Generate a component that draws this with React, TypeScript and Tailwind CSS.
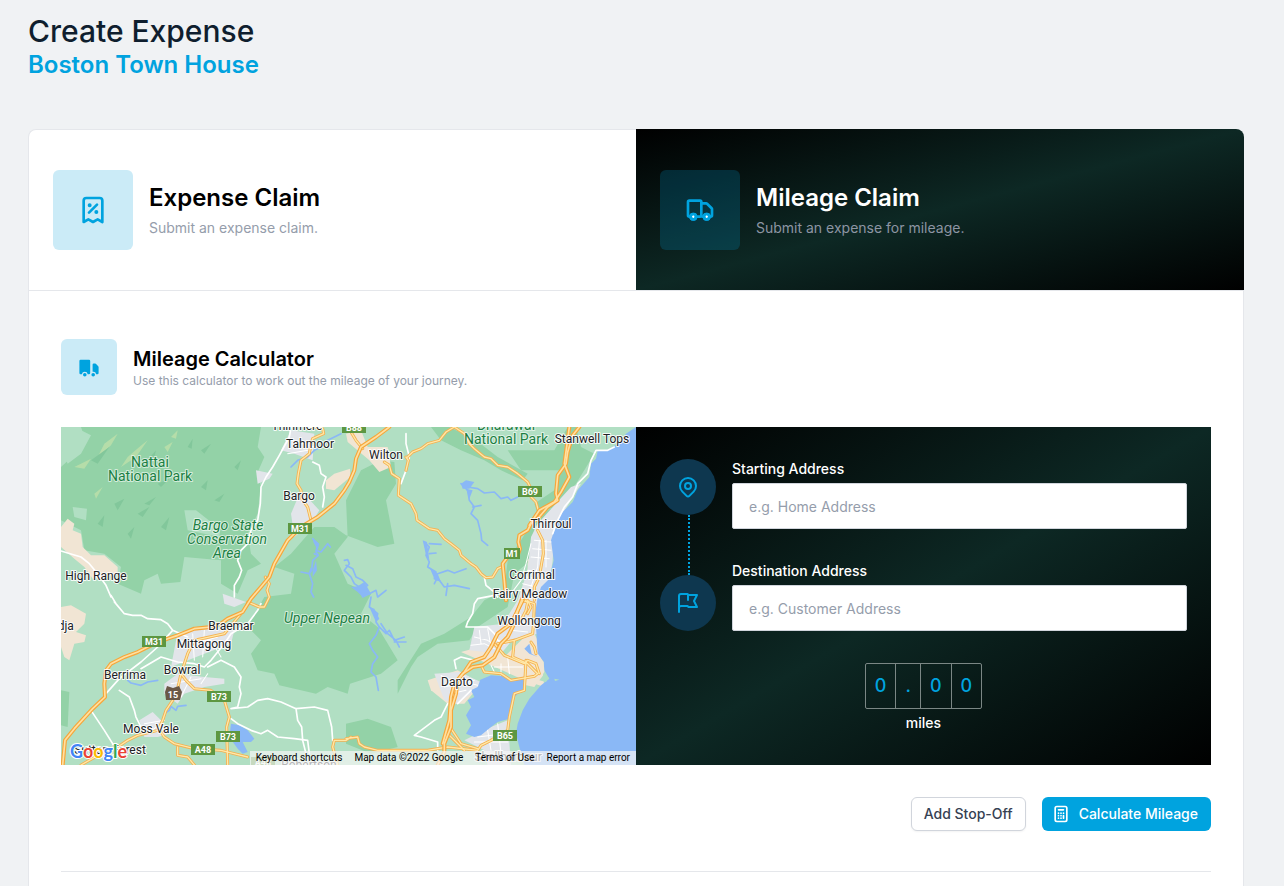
import { useState } from 'react';
import {
  HiOutlineCalculator,
  HiOutlineFlag,
  HiOutlineLocationMarker,
  HiOutlineReceiptTax,
  HiTruck,
} from 'react-icons/hi';

type Label = { text: string; x: number; y: number; park?: boolean; italic?: boolean };

const labels: Label[] = [
  { text: 'Thirlmere', x: 236, y: 3 },
  { text: 'Tahmoor', x: 249, y: 21 },
  { text: 'Wilton', x: 325, y: 32 },
  { text: 'Stanwell Tops', x: 531, y: 16 },
  { text: 'Dharawal', x: 445, y: 3, park: true },
  { text: 'National Park', x: 445, y: 17, park: true },
  { text: 'Nattai', x: 89, y: 40, park: true },
  { text: 'National Park', x: 89, y: 54, park: true },
  { text: 'Bargo', x: 238, y: 73 },
  { text: 'Bargo State', x: 167, y: 103, park: true, italic: true },
  { text: 'Conservation', x: 166, y: 117, park: true, italic: true },
  { text: 'Area', x: 166, y: 131, park: true, italic: true },
  { text: 'Thirroul', x: 490, y: 101 },
  { text: 'Corrimal', x: 471, y: 152 },
  { text: 'Fairy Meadow', x: 469, y: 171 },
  { text: 'High Range', x: 35, y: 153 },
  { text: 'Wandja', x: -7, y: 203 },
  { text: 'Braemar', x: 170, y: 203 },
  { text: 'Upper Nepean', x: 266, y: 196, park: true, italic: true },
  { text: 'Wollongong', x: 468, y: 198 },
  { text: 'Mittagong', x: 143, y: 221 },
  { text: 'Berrima', x: 64, y: 252 },
  { text: 'Bowral', x: 121, y: 247 },
  { text: 'Dapto', x: 396, y: 259 },
  { text: 'Moss Vale', x: 90, y: 306 },
  { text: 'Sutton Forest', x: 49, y: 327 },
  { text: 'Robertson', x: 248, y: 342 },
  { text: 'Shellharbour', x: 447, y: 334 },
];

const shields = [
  { text: 'B88', x: 293, y: 0 },
  { text: 'M31', x: 239, y: 101 },
  { text: 'B69', x: 469, y: 64 },
  { text: 'M1', x: 451, y: 126 },
  { text: 'M31', x: 93, y: 214 },
  { text: 'B73', x: 158, y: 269 },
  { text: 'B73', x: 167, y: 309 },
  { text: 'A48', x: 142, y: 322 },
  { text: 'A48', x: 202, y: 335 },
  { text: 'B65', x: 444, y: 308 },
];

const parks = [
  'M60 0L600 0L590 60L610 90L588 140L600 180L590 260L560 320L570 380L600 410L560 430L530 500L480 470L480 400L370 390L358 465L300 470L290 440L250 460L240 500L170 470L180 420L130 380L70 370L60 310L0 280L0 120L55 70L70 30Z',
  'M1000 105L1005 170L975 220L1000 350L950 360L855 325L820 300L760 300L690 380L640 420L700 440L690 500L610 510L560 600L600 640L570 680L590 730L640 740L655 775L765 800L800 780L860 800L867 770L960 740L1010 700L950 600L900 560L930 500L860 470L820 380L860 330L855 220L900 130L960 100Z',
  'M1110 0L1165 0L1245 40L1310 90L1400 140L1385 160L1320 130L1270 100L1200 70L1140 40Z',
  'M1340 70L1480 70L1520 0L1545 0L1560 60L1600 80L1545 170L1480 240L1430 260L1420 230L1480 190L1500 130L1380 130Z',
  'M1430 260L1500 235L1420 300L1410 400L1360 440L1340 540L1250 600L1225 640L1130 650L1070 690L1050 720L1010 800L1010 760L1080 650L1150 620L1230 570L1270 520L1330 490L1340 400L1380 340Z',
  'M0 790L25 795L20 900L0 895Z',
  'M855 890L920 875L990 900L1010 960L930 980L855 950Z',
];

const beige = [
  'M0 300L20 275L40 290L35 310L60 320L65 360L90 385L130 385L170 420L170 435L140 450L95 455L70 420L40 395L0 360Z',
  'M0 540L30 535L75 560L70 590L45 615L75 625L70 645L40 650L25 700L10 690L0 660Z',
  'M795 160L820 140L867 125L868 150L820 190L795 185Z',
  'M855 20L900 10L920 60L980 60L990 120L955 135L925 100L860 45Z',
  'M1100 760L1190 730L1260 770L1210 830L1160 830L1110 790Z',
  'M1200 675L1290 650L1330 690L1400 620L1410 600L1430 640L1440 690L1450 780L1390 760L1280 710Z',
  'M1400 400L1440 340L1430 420L1400 470Z',
];

const urban = [
  'M660 70L690 10L760 20L755 100L700 80Z',
  'M585 130L635 140L625 155L590 170Z',
  'M690 260L720 190L775 250L750 290L700 330Z',
  'M485 500L555 525L520 540L490 530Z',
  'M350 615L440 600L520 610L510 650L430 680L330 720Z',
  'M310 770L350 740L430 750L490 755L490 770L430 780L370 800L350 830L310 800Z',
  'M235 880L275 855L300 880L325 920L290 930L250 930Z',
  'M1530 180L1560 170L1480 300L1475 400L1465 470L1435 550L1430 620L1340 640L1320 600L1370 520L1400 430L1410 330L1430 290Z',
  'M1240 600L1330 590L1370 620L1320 680L1225 670Z',
  'M1120 740L1195 735L1270 770L1190 830L1150 820Z',
  'M1210 940L1290 900L1340 880L1350 1014L1280 1014L1270 970Z',
];

const coast =
  'M1725 0L1695 20L1675 48L1640 68L1610 72L1605 95L1590 110L1585 150L1550 190L1535 225L1500 260L1480 310L1470 340L1478 400L1465 455L1440 480L1430 510L1422 560L1425 600L1430 680L1448 705L1450 730L1465 755L1440 775L1405 815L1385 850L1370 890L1365 920L1375 960L1390 1014L1725 1014Z';

const lake =
  'M1230 790L1250 780L1258 758L1290 745L1330 748L1360 758L1398 757L1385 790L1360 810L1350 850L1345 875L1310 885L1290 900L1260 925L1240 930L1215 920L1230 895L1215 865L1230 840L1220 820L1240 810Z';

const rivers = [
  'M755 335L770 350L765 375L772 385L755 400L752 430L745 440L755 470L750 495L758 510M720 435L745 440L750 425M765 370L780 375L800 350L808 360M770 385L760 380',
  'M850 400L860 398L865 410L850 430L870 450L880 470L910 490L915 505M855 415L875 425L885 450L905 460L920 475L900 490L905 510L925 500M930 510L925 540L950 560L945 585L955 600L945 625L925 650L935 670L950 690L935 710L930 735L945 750L952 790',
  'M955 600L975 620L985 610L1000 640L1030 630M960 590L980 620L1005 640L1015 660M1000 645L1035 645M925 500L945 490L950 510L975 490',
  'M1200 170L1220 190L1225 220L1240 240L1230 260L1250 280L1260 320L1262 340L1280 355M1220 180L1250 185L1270 198L1300 195L1320 215L1340 210L1350 220L1370 210M1235 240L1260 235',
  'M1090 345L1105 360L1095 385L1105 405L1100 420L1125 435L1120 455L1135 460L1150 480L1180 475L1225 485M1105 350L1140 352M1105 380L1125 378M1130 440L1160 430L1180 438L1215 425M1160 470L1155 505M1130 450L1120 470',
  'M200 760L210 768L240 775L260 765L290 760M310 860L325 850L330 838L345 850L350 838L375 835M690 120L710 100L740 90L760 70L780 60L800 40L840 20',
];

const highways = [
  'M985 0L945 30L900 60L885 95L880 130L865 165L850 190L820 230L770 270L745 285L720 300L680 340L640 410L625 450L600 480L570 515L545 555L500 575L480 590L450 600L400 605L350 625L320 635L270 655L230 675L190 690L150 710L135 730L130 770L132 810L95 845L40 905L12 940L5 1014',
  'M1555 0L1535 25L1520 75L1515 110L1490 145L1485 200L1490 220L1460 240L1430 275L1410 290L1400 310L1375 325L1372 345L1377 365L1370 385L1340 390L1325 410L1330 460L1335 520',
  'M1525 0L1510 110L1525 150L1500 195L1480 225L1435 250L1405 295',
  'M1390 500L1370 550L1360 590L1340 630L1320 650L1300 690L1265 715L1235 720L1205 740L1190 760L1185 800L1170 850L1170 900L1150 950L1150 975L1130 1014',
  'M1385 520L1350 590L1310 620L1290 660L1270 690L1230 705L1210 735L1180 770L1170 810L1165 880L1145 950',
];

const mainRoads = [
  'M760 0L785 5L788 20L755 35L750 50L745 80L720 100L712 140L708 170L720 190L722 215L740 240L750 280',
  'M870 15L885 40L905 65M1040 90L1055 75L1080 65L1100 50L1135 40L1155 15L1180 0L1210 20L1225 50L1240 65L1270 90L1290 95L1310 115L1340 120L1370 140L1400 165L1410 185L1410 210L1425 225L1432 250M1035 90L1042 100L1035 130M970 105L985 115L992 140L1015 155L1012 205L1050 230L1065 260L1068 280L1105 305L1130 310L1150 335L1170 350L1195 370L1200 385L1230 410L1245 420L1260 440L1275 452L1295 450L1310 425L1325 418',
  'M540 560L490 620L400 640L380 680L360 740L375 760L400 785L450 790L490 820L505 870L497 900L500 1014M360 740L350 785L335 820L315 850L305 880L290 910L230 925L200 940L170 960L120 980L60 1014M290 900L310 930L340 950L400 965L480 970L560 990M350 960L350 985L380 990L400 1014',
  'M613 450L625 470L618 490L625 510L610 540L595 540L560 525M870 930L855 940L820 940L815 960L830 1014M855 935L890 930L895 950L910 960L930 965L950 970L1100 970L1160 960L1250 970L1260 955L1290 940L1340 910L1345 870L1360 800L1390 790L1395 700',
  'M1430 310L1445 340L1447 380L1440 420L1435 450L1420 480L1420 520M1390 520L1420 530L1418 580L1415 620L1360 640L1310 650M1360 640L1355 690L1400 710L1430 740L1420 748L1350 760L1320 740L1270 735L1260 715M1300 650L1330 685L1390 710L1400 700L1425 710L1435 740M1160 920L1180 940L1210 970M1170 905L1200 950L1250 965',
  'M1380 520L1400 525L1395 550L1380 580M1400 520L1410 540L1400 560M1410 645L1420 660L1425 680',
];

const whiteRoads = [
  'M690 0L685 30L655 85L635 120L615 150L600 180L598 230L590 280L570 310L560 350L540 370L530 400L542 430L535 450L520 475L520 510M0 372L20 378L60 390L85 410L110 440L135 475L150 510',
  'M135 800L175 755L240 705L290 660L335 610L380 630M150 505L165 530L190 560L215 565L240 565L260 575L300 578L320 590L335 610M190 560L160 525M240 725L300 690L350 705L400 710L430 720L450 700L490 650L510 620L560 590L590 550L600 530M440 720L480 700L520 720L540 750L535 780L540 800L530 840L510 845L560 840L590 820L620 815L660 825L705 845L760 840L800 850L812 900L815 940M705 845L710 880L722 900L725 940L740 1000M175 790L205 810L220 850L225 870L240 900M90 850L130 910L180 990',
  'M510 875L530 890L570 910L600 920L620 910L650 930L700 935L740 940L745 980M755 105L775 115L780 140L795 150L785 180L790 210L785 240M1035 20L1035 50L1045 90L1035 130L1020 170',
  'M1270 450L1275 475L1300 495L1310 510M1300 505L1250 515L1240 530L1235 560L1220 585L1215 600L1250 600L1280 600L1300 620L1310 640L1330 650M1660 60L1640 70L1605 70L1590 100L1580 140L1550 170L1535 210L1510 240L1490 280L1475 320',
  'M1060 925L1120 880L1140 870L1160 830M1060 925L1080 930L1130 945L1130 970M1190 830L1230 790M1185 725L1180 700L1200 690L1240 700',
];

// suburb streets along the coast
const streets = [
  'M1410 350L1395 410L1380 460L1350 500M1420 340L1470 345M1415 365L1470 370M1410 390L1465 395M1435 340L1430 420L1410 480M1455 340L1455 420M1400 430L1440 435M1395 450L1430 455M1385 470L1425 480M1375 490L1410 500',
  'M1240 630L1280 640L1310 660M1255 610L1260 650M1280 605L1290 660M1230 655L1270 650L1300 665M1370 580L1400 590M1350 610L1400 615M1340 690L1345 740M1300 720L1385 720M1320 710L1320 745M1290 715L1300 735',
  'M1140 745L1190 770L1240 760M1150 780L1210 765L1250 775M1170 800L1215 790M1250 930L1330 920M1280 910L1290 970M1310 890L1320 980M1240 945L1340 945',
  'M350 640L400 650L470 630M395 620L400 700M430 610L425 690M450 640L480 690M330 770L420 755M390 750L360 810M420 770L440 740M250 890L310 880M260 920L300 890M680 80L740 70M690 40L760 60',
];

const Shapes = ({ list, color }: { list: string[]; color: string }) => (
  <>
    {list.map((d) => (
      <path key={d} d={d} fill={color} />
    ))}
  </>
);

const Lines = ({ list, color, width }: { list: string[]; color: string; width: number }) => (
  <>
    {list.map((d) => (
      <path key={d} d={d} fill="none" stroke={color} strokeWidth={width} strokeLinejoin="round" strokeLinecap="round" />
    ))}
  </>
);

const googleLetters = [
  { letter: 'G', color: '#4285f4' },
  { letter: 'o', color: '#ea4335' },
  { letter: 'o', color: '#fbbc05' },
  { letter: 'g', color: '#4285f4' },
  { letter: 'l', color: '#34a853' },
  { letter: 'e', color: '#ea4335' },
];

const MapArtwork = () => (
  <svg
    className="absolute inset-0 h-full w-full font-['Roboto',sans-serif]"
    viewBox="0 0 575 338"
    preserveAspectRatio="xMidYMid slice"
    role="img"
    aria-label="Map"
  >
    <rect width="575" height="338" fill="#b1dfc3" />
    {/* terrain is drawn at three times the label scale */}
    <g transform="scale(0.33334)">
      <Shapes list={parks} color="#93d2a7" />
      <path
        d="M130 50L170 20L150 55L110 90ZM200 90L235 60L260 40L225 90L180 120ZM330 30L350 10L345 35ZM100 200L125 180L105 215ZM40 120L90 95L70 125ZM310 60L335 45L320 75Z"
        fill="#b5dda9"
      />
      <path
        d="M90 100L145 60L110 110ZM250 110L285 70L275 110ZM160 230L190 215L170 250ZM250 230L285 210L265 235ZM230 260L265 240L245 270ZM300 300L325 270L315 310ZM200 320L220 300L210 335ZM290 170L325 155L300 180ZM420 70L450 50L430 80ZM520 120L540 100L530 130ZM420 180L440 160L435 190ZM110 290L130 265L125 300ZM380 60L395 35L392 65ZM460 220L490 200L475 225Z"
        fill="#82c79b"
      />
      <path
        d="M0 60L60 10L90 25L60 80L20 110ZM370 250L405 250L450 285L480 290L475 330L430 320L380 310ZM35 240L78 245L75 280L40 270Z"
        fill="#b1dfc3"
      />
      <Shapes list={beige} color="#f1e5d4" />
      <Shapes list={urban} color="#e2e5ea" />
      <path d={coast} fill="#8ab8f6" />
      <path d={lake} fill="#8ab8f6" />
      <path d="M510 890L535 895L560 910L580 935L570 945L545 945L560 975L545 980L530 965L505 930Z" fill="#8ab8f6" />
      <path d="M1370 795L1400 790L1400 815L1375 860L1362 870Z" fill="#b1dfc3" />
      <path d="M1385 700L1430 680L1448 705L1450 735L1420 780L1395 775Z" fill="#f1e5d4" />
      <path d="M1450 740L1463 752L1455 765L1435 760ZM1480 755L1495 758L1482 762Z" fill="#b1dfc3" />
      <path d="M1390 665L1405 650L1412 680L1430 690L1405 680Z" fill="#8ab8f6" />
      <Lines list={rivers} color="#8ab8f6" width={5} />
      <path
        d="M1200 170L1215 160L1240 165L1225 185L1205 185ZM1215 185L1235 190L1225 215ZM1085 340L1098 345L1105 400L1095 385ZM1105 420L1130 440L1140 465L1120 455ZM870 480L890 478L910 465L930 500L905 510L890 495ZM925 540L940 545L955 575L945 585ZM755 335L775 350L770 370L757 345ZM755 430L765 400L768 430L755 450Z"
        fill="#8ab8f6"
      />
      <Lines list={whiteRoads} color="#ffffff" width={5} />
      <Lines list={streets} color="#ffffff" width={3} />
      <Lines list={mainRoads} color="#f4b04f" width={9} />
      <Lines list={mainRoads} color="#ffe8a8" width={4} />
      <Lines list={highways} color="#f6a63a" width={12} />
      <Lines list={highways} color="#ffe0a0" width={5} />
    </g>

    {shields.map(({ text, x, y }) => (
      <g key={`${text}-${x}`}>
        <rect x={x - text.length * 4} y={y - 5} width={text.length * 8} height="11" fill="#5d9741" />
        <text x={x} y={y + 4} textAnchor="middle" fontSize="9" fontWeight="700" fill="#fff">
          {text}
        </text>
      </g>
    ))}
    <path d="M106 259L112 261L118 259L121 265L119 273L105 273L104 265Z" fill="#6a5847" />
    <text x="112" y="271" textAnchor="middle" fontSize="9" fontWeight="700" fill="#fff">
      15
    </text>

    {labels.map(({ text, x, y, park, italic }) => (
      <text
        key={`${text}-${y}`}
        x={x}
        y={y}
        textAnchor="middle"
        fontSize={park ? 14 : 12}
        fontStyle={italic ? 'italic' : 'normal'}
        fill={park ? '#1b7f43' : '#202124'}
        stroke="#ffffff"
        strokeOpacity={park ? 0.6 : 0.9}
        strokeWidth="2"
        strokeLinejoin="round"
        paintOrder="stroke"
      >
        {text}
      </text>
    ))}

    <text
      x="9"
      y="331"
      fontSize="18"
      fontWeight="700"
      stroke="#ffffff"
      strokeWidth="2"
      strokeLinejoin="round"
      paintOrder="stroke"
      className="font-['Lato',sans-serif]"
    >
      {googleLetters.map(({ letter, color }, i) => (
        <tspan key={i} fill={color}>
          {letter}
        </tspan>
      ))}
    </text>
  </svg>
);

const RouteMap = () => (
  <div className="relative overflow-hidden bg-[#b1dfc3]">
    <MapArtwork />
    <div className="absolute bottom-0 right-0 flex whitespace-nowrap font-['Roboto',sans-serif] text-[10px] leading-[14px] text-black">
      <button type="button" className="bg-[#f5f5f5]/70 px-1.5">
        Keyboard shortcuts
      </button>
      <span className="bg-[#f5f5f5]/70 px-1.5">Map data ©2022 Google</span>
      <a href="#terms" className="bg-[#f5f5f5]/70 px-1.5">
        Terms of Use
      </a>
      <a href="#report" className="bg-[#f5f5f5]/70 px-1.5">
        Report a map error
      </a>
    </div>
  </div>
);

const TruckIcon = () => (
  <svg className="h-8 w-8" fill="none" viewBox="0 0 24 24" strokeWidth="2" stroke="currentColor" aria-hidden="true">
    <path fill="#fff" d="M9 17a2 2 0 11-4 0 2 2 0 014 0zM19 17a2 2 0 11-4 0 2 2 0 014 0z" />
    <path
      strokeLinecap="round"
      strokeLinejoin="round"
      d="M13 16V6a1 1 0 00-1-1H4a1 1 0 00-1 1v10a1 1 0 001 1h1m8-1a1 1 0 01-1 1H9m4-1V8a1 1 0 011-1h2.586a1 1 0 01.707.293l3.414 3.414a1 1 0 01.293.707V16a1 1 0 01-1 1h-1m-6-1a1 1 0 001 1h1M5 17a2 2 0 104 0m-4 0a2 2 0 114 0m6 0a2 2 0 104 0m-4 0a2 2 0 114 0"
    />
  </svg>
);

const AddressField = ({
  id,
  label,
  placeholder,
  value,
  onChange,
}: {
  id: string;
  label: string;
  placeholder: string;
  value: string;
  onChange: (value: string) => void;
}) => (
  <div>
    <label htmlFor={id} className="block text-sm font-medium text-white">
      {label}
    </label>
    <input
      id={id}
      type="text"
      value={value}
      placeholder={placeholder}
      onChange={(e) => onChange(e.target.value)}
      className="mt-1 block h-[46px] w-full rounded-xs border border-gray-300 bg-white px-4 text-sm text-gray-900 placeholder:text-[#959dab]"
    />
  </div>
);

export default function App() {
  const [start, setStart] = useState('');
  const [destination, setDestination] = useState('');

  return (
    <div className="min-h-screen bg-[#f0f2f4] px-7 pt-[11px] font-['Inter',sans-serif] lg:pr-10">
      <header>
        <h1 className="text-3xl font-medium leading-10 text-[#0f1e2e]">Create Expense</h1>
        <p className="text-2xl font-semibold leading-7 text-[#00a3df]">Boston Town House</p>
      </header>

      <main className="mt-[50px]">
        <div className="grid grid-cols-2">
          <a href="#expense" className="flex items-center gap-4 rounded-tl-lg border-l border-t border-gray-200 bg-white px-6 py-10">
            <span className="flex h-20 w-20 items-center justify-center rounded-md bg-[#cbebf7] text-[#00a3df]">
              <HiOutlineReceiptTax className="h-8 w-8" />
            </span>
            <span>
              <span className="block text-2xl font-semibold text-black">Expense Claim</span>
              <span className="mt-1 block text-sm text-[#959dab]">Submit an expense claim.</span>
            </span>
          </a>
          <a
            href="#mileage"
            className="flex items-center gap-4 rounded-tr-lg border-t border-transparent bg-linear-to-br/srgb from-black via-[#0d2824] to-black bg-origin-border px-6 py-10"
          >
            <span className="flex h-20 w-20 items-center justify-center rounded-md bg-[#00a3df]/20 text-[#00a3df]">
              <TruckIcon />
            </span>
            <span>
              <span className="block text-2xl font-semibold text-white">Mileage Claim</span>
              <span className="mt-1 block text-sm text-[#8d95a3]">Submit an expense for mileage.</span>
            </span>
          </a>
        </div>

        <div className="border-x border-t border-gray-200 bg-white px-8 pt-12">
          <div className="flex items-center gap-4">
            <span className="flex h-14 w-14 items-center justify-center rounded-md bg-[#cbebf7] text-[#00a3df]">
              <HiTruck className="h-6 w-6" />
            </span>
            <div className="pt-1">
              <h2 className="text-xl font-semibold leading-6 text-black">Mileage Calculator</h2>
              <p className="text-xs leading-5 text-[#959dab]">Use this calculator to work out the mileage of your journey.</p>
            </div>
          </div>

          <div className="mt-8 grid grid-cols-2">
            <RouteMap />

            <div className="bg-linear-to-br/srgb from-black via-[#0d2824] to-black px-6 py-8">
              <div className="flex gap-4">
                <div className="flex w-14 flex-col">
                  <span className="flex h-14 w-14 items-center justify-center rounded-full bg-[#0e374f] text-[#00a3df]">
                    <HiOutlineLocationMarker className="h-6 w-6" />
                  </span>
                  <span className="ml-7 flex-1 border-l-2 border-dotted border-[#00a3df]"></span>
                  <span className="flex h-14 w-14 items-center justify-center rounded-full bg-[#0e374f] text-[#00a3df]">
                    <HiOutlineFlag className="h-6 w-6" />
                  </span>
                </div>
                <div className="flex-1 space-y-8">
                  <AddressField
                    id="start"
                    label="Starting Address"
                    placeholder="e.g. Home Address"
                    value={start}
                    onChange={setStart}
                  />
                  <AddressField
                    id="destination"
                    label="Destination Address"
                    placeholder="e.g. Customer Address"
                    value={destination}
                    onChange={setDestination}
                  />
                </div>
              </div>

              <div className="mt-8 flex flex-col items-center">
                <div className="flex h-[46px] divide-x divide-[#7b8785] rounded-xs border border-[#7b8785] text-lg text-[#00a3df]">
                  {['0', '.', '0', '0'].map((digit, i) => (
                    <span key={i} className="flex items-center px-[9px] font-medium">
                      {digit}
                    </span>
                  ))}
                </div>
                <span className="mt-1 text-sm font-medium text-white">miles</span>
              </div>
            </div>
          </div>

          <div className="mt-8 flex justify-end gap-4">
            <button
              type="button"
              className="h-[34px] rounded-md border border-gray-300 bg-white px-3 text-sm font-medium text-gray-700 shadow-xs"
            >
              Add Stop-Off
            </button>
            <button
              type="button"
              className="flex h-[34px] items-center gap-2 rounded-md border border-transparent bg-[#00a3df] pl-2 pr-3 text-sm font-medium text-white"
            >
              <HiOutlineCalculator className="h-5 w-5" />
              Calculate Mileage
            </button>
          </div>

          <div className="mt-10 h-10 border-t border-gray-200"></div>
        </div>
      </main>
    </div>
  );
}
